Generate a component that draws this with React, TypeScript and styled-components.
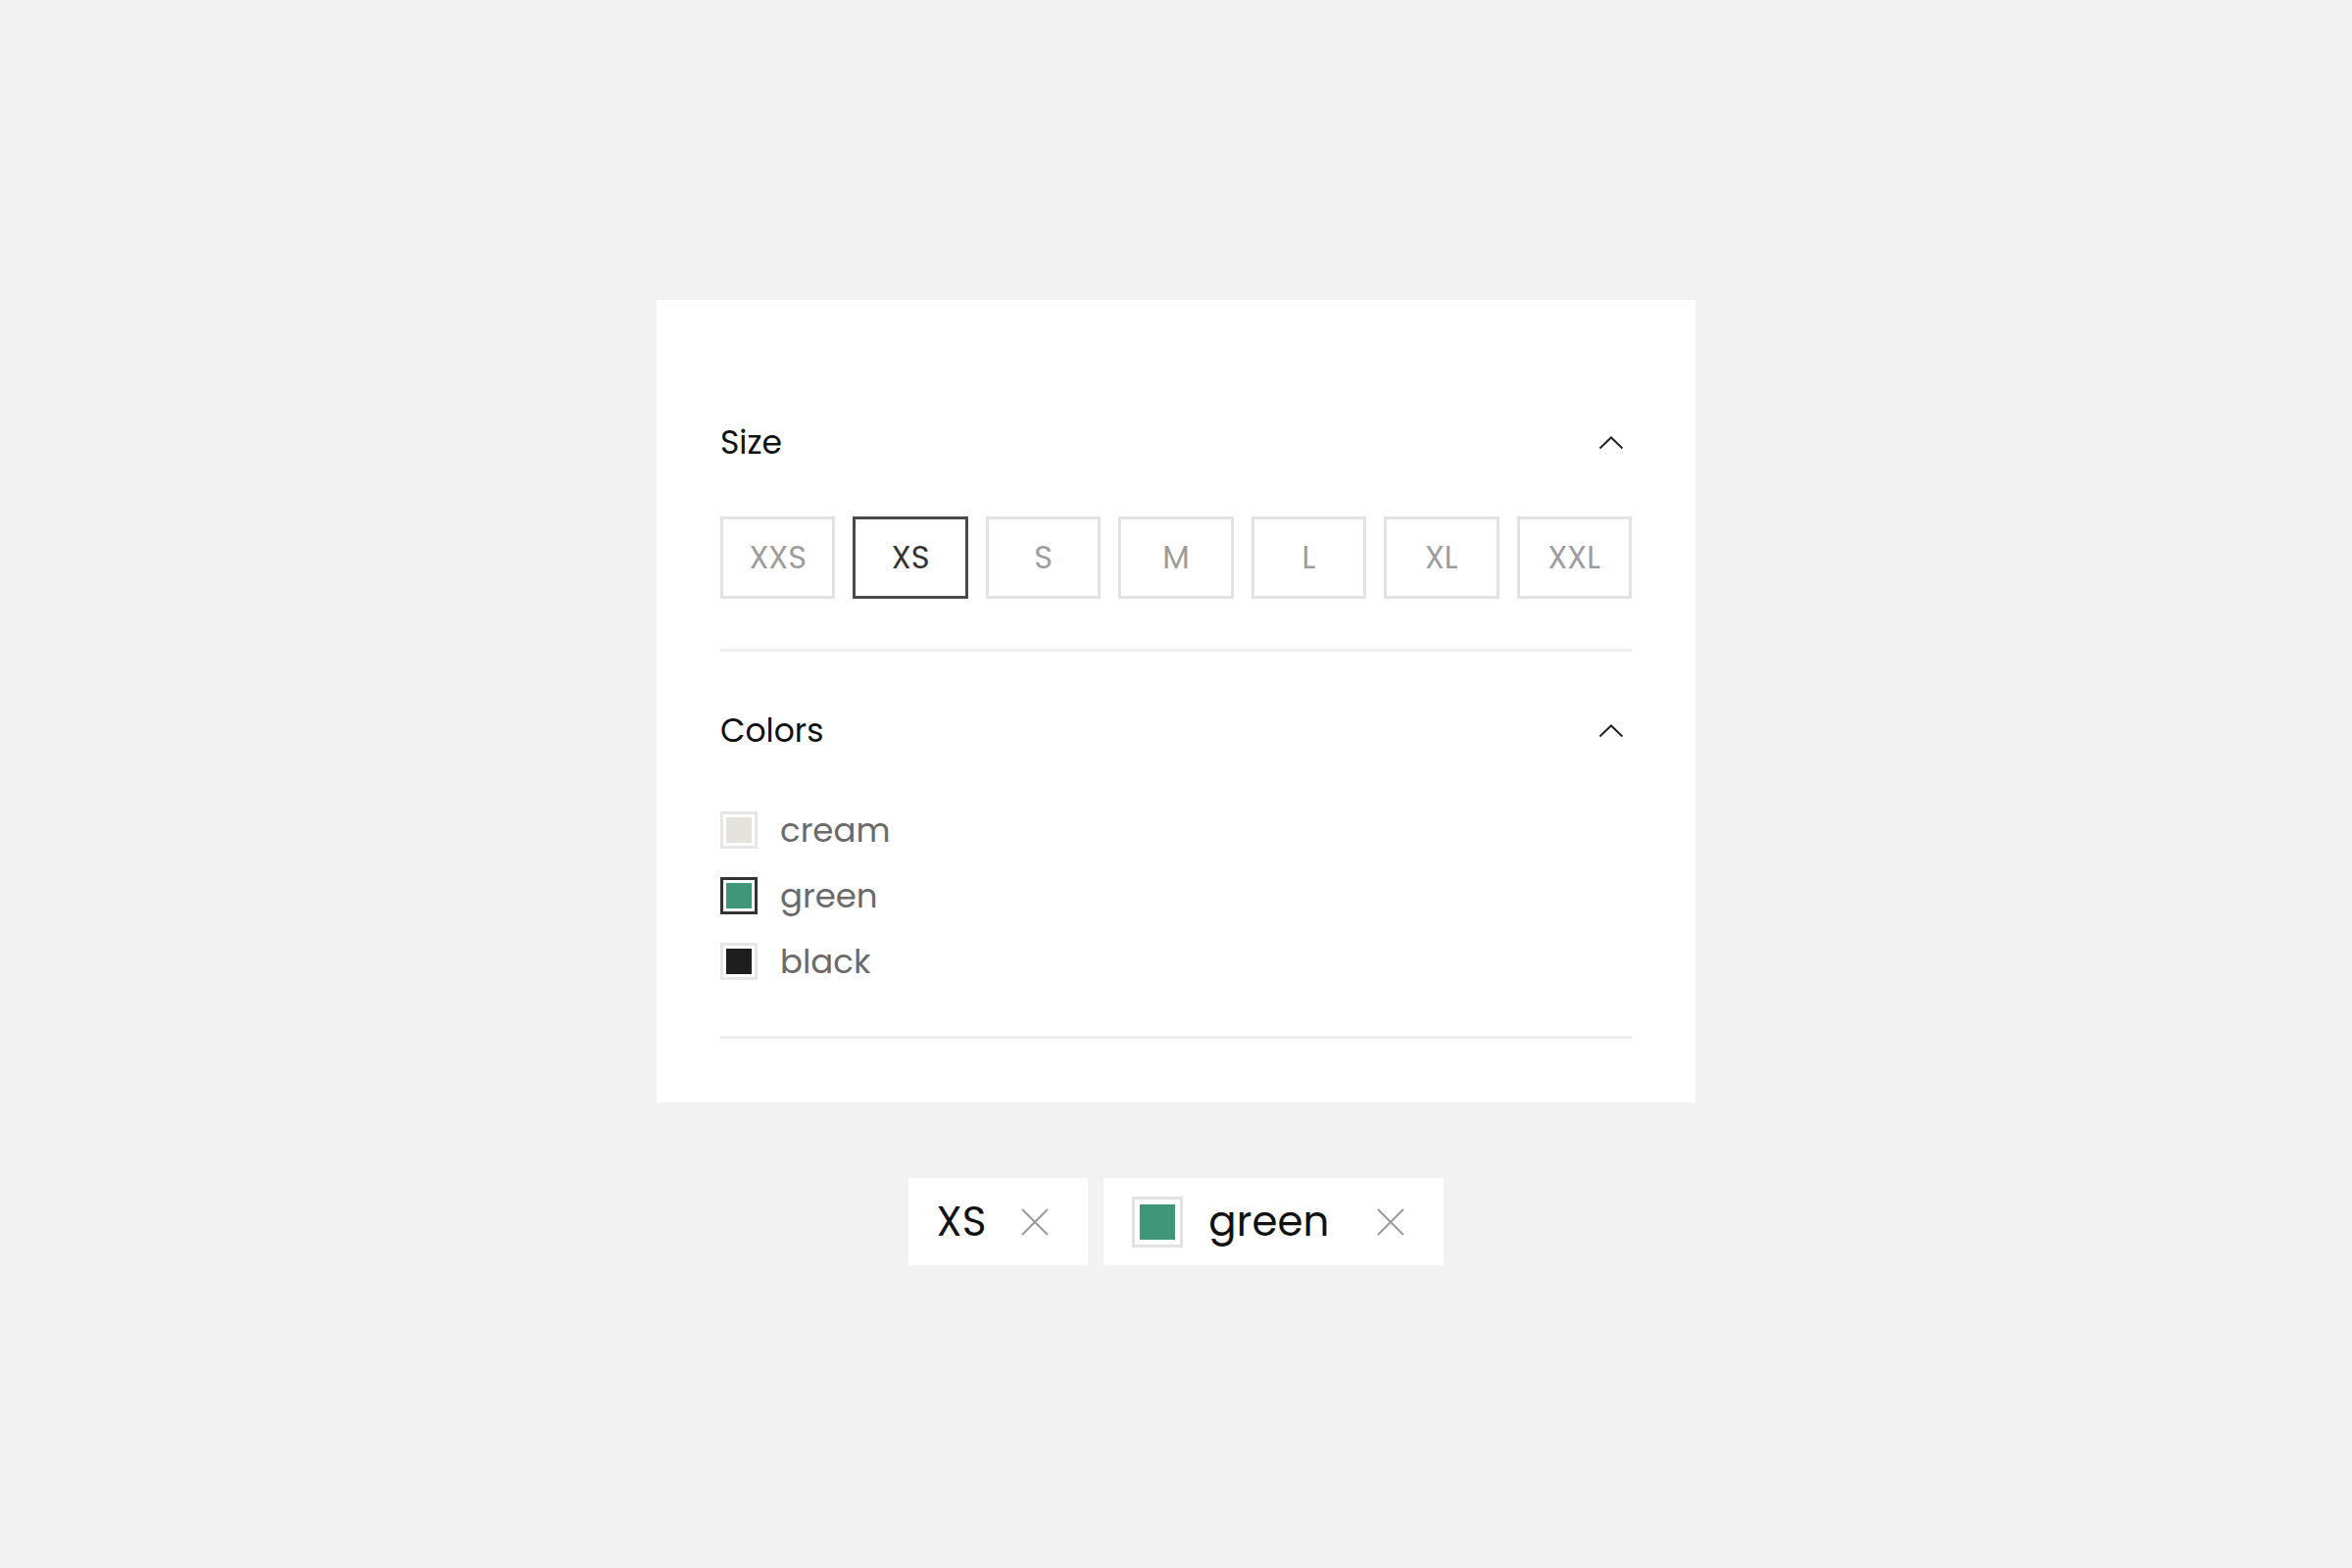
import React, { useState } from 'react';
import styled, { createGlobalStyle } from 'styled-components';

const GlobalStyle = createGlobalStyle`
  html, body {
    margin: 0;
    padding: 0;
    background: #f2f2f2;
    font-family: 'Poppins', Inter, 'Noto Sans', sans-serif;
  }
`;

const SIZES = ['XXS', 'XS', 'S', 'M', 'L', 'XL', 'XXL'];

const COLORS = [
  { name: 'cream', hex: '#e5e1dc' },
  { name: 'green', hex: '#3f9678' },
  { name: 'black', hex: '#1e1e1e' },
];

const ChevronUp = () => (
  <svg width='26' height='14' viewBox='0 0 26 14' fill='none'>
    <path d='M1.5 12.5L13 1.5L24.5 12.5' stroke='#222' strokeWidth='2' />
  </svg>
);

const CloseIcon = () => (
  <svg width='28' height='28' viewBox='0 0 28 28' fill='none'>
    <path d='M1 1L27 27M27 1L1 27' stroke='#999' strokeWidth='2' />
  </svg>
);

const App = () => {
  const [sSize, setSize] = useState('XS');
  const [sColor, setColor] = useState('green');

  const oColor = COLORS.find((c) => c.name === sColor);

  return (
    <Page>
      <GlobalStyle />
      <Panel>
        <Section>
          <SectionHeader>
            <SectionTitle>Size</SectionTitle>
            <ChevronUp />
          </SectionHeader>
          <SizeGrid>
            {SIZES.map((s) => (
              <SizeButton
                key={s}
                $active={s === sSize}
                onClick={() => setSize(s)}
                type='button'
              >
                {s}
              </SizeButton>
            ))}
          </SizeGrid>
        </Section>

        <Section>
          <SectionHeader>
            <SectionTitle>Colors</SectionTitle>
            <ChevronUp />
          </SectionHeader>
          <ColorList>
            {COLORS.map((c) => (
              <ColorRow key={c.name} onClick={() => setColor(c.name)}>
                <Swatch $active={c.name === sColor}>
                  <SwatchFill $color={c.hex} />
                </Swatch>
                <ColorName>{c.name}</ColorName>
              </ColorRow>
            ))}
          </ColorList>
        </Section>
      </Panel>

      <Chips>
        <Chip>
          <ChipLabel>{sSize}</ChipLabel>
          <CloseIcon />
        </Chip>
        {oColor && (
          <Chip $swatch>
            <ChipSwatch>
              <SwatchFill $color={oColor.hex} />
            </ChipSwatch>
            <ChipLabel>{oColor.name}</ChipLabel>
            <CloseIcon />
          </Chip>
        )}
      </Chips>
    </Page>
  );
};

const Page = styled.div`
  min-height: 1600px;
  box-sizing: border-box;
  padding-top: 306px;
  display: flex;
  flex-direction: column;
  align-items: center;
`;

const Panel = styled.div`
  width: 1060px;
  box-sizing: border-box;
  background: #ffffff;
  padding: 70px 65px 65px;
`;

const Section = styled.section`
  padding: 56px 0 51px;
  border-bottom: 3px solid #eeeeee;

  & + & {
    padding: 61px 0 52px;
  }
`;

const SectionHeader = styled.div`
  height: 40px;
  display: flex;
  align-items: center;
  justify-content: space-between;
  padding-right: 8px;
  margin-bottom: 55px;
`;

const SectionTitle = styled.h3`
  margin: 0;
  font-weight: 400;
  font-size: 33px;
  color: #111111;
`;

const SizeGrid = styled.div`
  display: grid;
  grid-template-columns: repeat(7, 1fr);
  gap: 18px;
`;

const SizeButton = styled.button<{ $active: boolean }>`
  height: 84px;
  box-sizing: border-box;
  background: #ffffff;
  border: 3px solid ${(p) => (p.$active ? '#4a4a4a' : '#e2e2e2')};
  color: ${(p) => (p.$active ? '#333333' : '#9d9d9d')};
  font-family: inherit;
  font-size: 32px;
  font-weight: 400;
  cursor: pointer;
  padding: 0;
`;

const ColorList = styled.div`
  display: flex;
  flex-direction: column;
  gap: 19px;
  padding-top: 2px;
`;

const ColorRow = styled.div`
  height: 48px;
  display: flex;
  align-items: center;
  gap: 23px;
  cursor: pointer;
`;

const Swatch = styled.div<{ $active: boolean }>`
  width: 38px;
  height: 38px;
  box-sizing: border-box;
  padding: 3px;
  border: 3px solid ${(p) => (p.$active ? '#333333' : '#e6e6e6')};
  background: #ffffff;
`;

const SwatchFill = styled.div<{ $color: string }>`
  width: 100%;
  height: 100%;
  background: ${(p) => p.$color};
`;

const ColorName = styled.span`
  font-size: 34px;
  font-weight: 400;
  color: #6a6a6a;
`;

const Chips = styled.div`
  display: flex;
  gap: 16px;
  margin-top: 77px;
`;

const Chip = styled.div<{ $swatch?: boolean }>`
  height: 89px;
  box-sizing: border-box;
  background: #ffffff;
  display: flex;
  align-items: center;
  padding: 0 40px 0 29px;
  gap: ${(p) => (p.$swatch ? '26px' : '36px')};

  & > svg:last-child {
    margin-left: ${(p) => (p.$swatch ? '23px' : '0')};
  }
`;

const ChipSwatch = styled.div`
  width: 52px;
  height: 52px;
  box-sizing: border-box;
  padding: 5px;
  border: 3px solid #e2e2e2;
`;

const ChipLabel = styled.span`
  font-size: 42px;
  font-weight: 400;
  color: #111111;
`;

export default App;
